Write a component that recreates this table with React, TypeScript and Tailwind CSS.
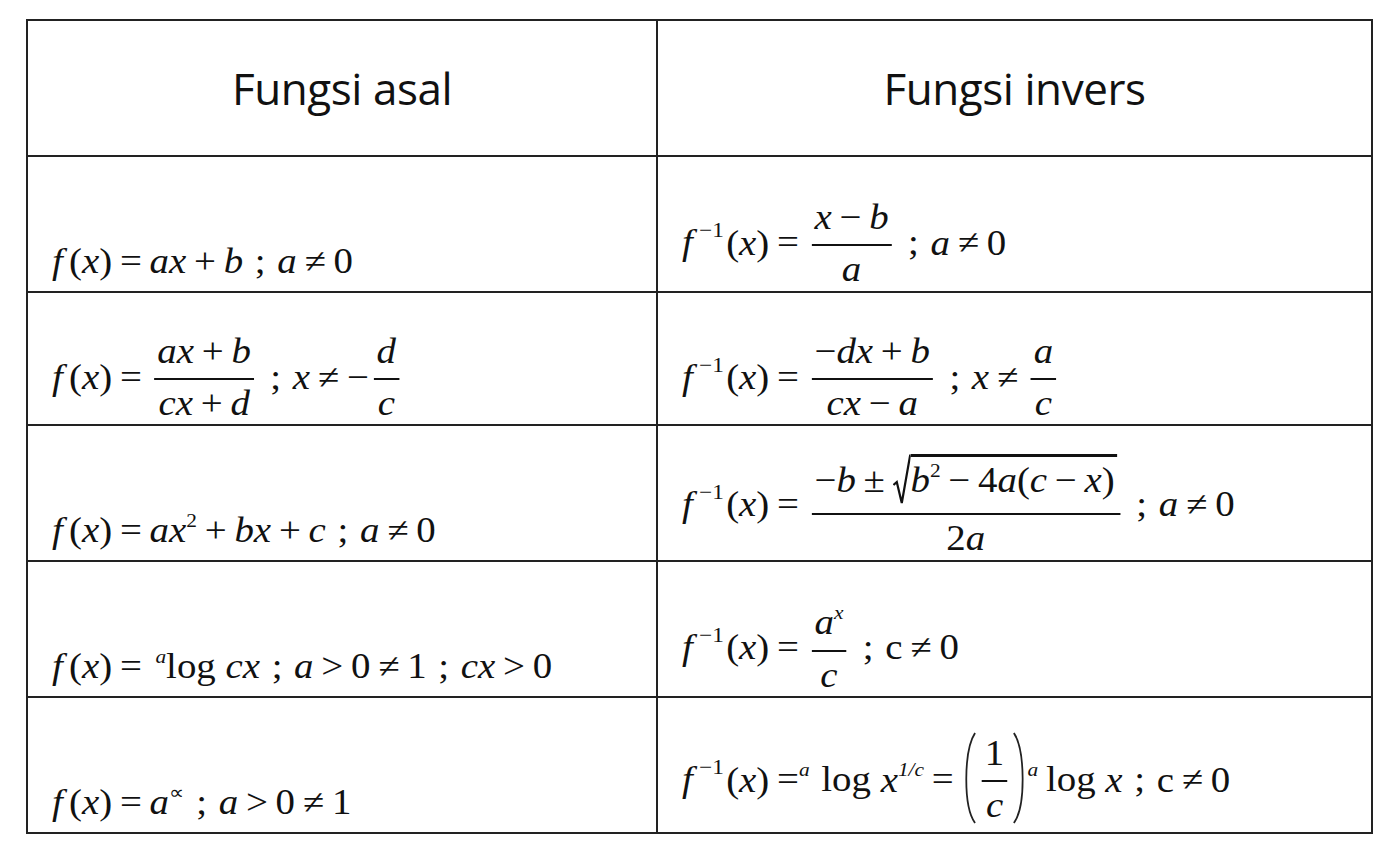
import React from "react";

type C = { children?: React.ReactNode };

const V = ({ children }: C) => <i className="italic">{children}</i>;
const F = () => <i className="italic mr-[0.16em]">f</i>;
const Op = ({ children }: C) => <span className="mx-[0.2em]">{children}</span>;
const Semi = () => <span className="mx-[0.3em]">;</span>;
const Sup = ({ children }: C) => <span className="text-[0.55em] align-[0.8em]">{children}</span>;

const Frac = ({ n, d }: { n: React.ReactNode; d: React.ReactNode }) => (
  <span className="inline-flex flex-col items-center align-middle mx-[0.12em]">
    <span className="px-[0.08em] pb-[9px]">{n}</span>
    <span className="self-stretch h-[2px] bg-[#111]"></span>
    <span className="px-[0.08em] pt-[6px] pb-[6px]">{d}</span>
  </span>
);

const FInv = () => (
  <>
    <F />
    <span className="text-[0.6em] align-[0.8em] mr-[0.1em]">−1</span>(<V>x</V>)
  </>
);
const Fx = () => (
  <>
    <F />(<V>x</V>)
  </>
);

const Radical = ({ children }: C) => (
  <span className="inline-flex items-baseline">
    <svg className="self-stretch w-[16px]" viewBox="0 0 16 50" preserveAspectRatio="none">
      <path d="M0.5 31 L3.5 28 L8 49 L15.5 1.5 L16 1.5" fill="none" stroke="#111" strokeWidth="2" vectorEffect="non-scaling-stroke" />
    </svg>
    <span className="border-t-[3px] border-[#111] pt-[4px] pb-[5px] pr-[2px]">{children}</span>
  </span>
);

const Paren = ({ flip }: { flip?: boolean }) => (
  <svg width="14" height="92" viewBox="0 0 14 92" className={flip ? "-scale-x-100" : ""}>
    <path d="M12 1 C2 18 1 74 12 91" fill="none" stroke="#222" strokeWidth="1.6" />
  </svg>
);

const Math = ({ children }: C) => (
  <span className="inline-block origin-left scale-x-[1.11] font-['Liberation_Serif',serif] text-[35px] leading-none text-[#111] whitespace-nowrap">
    {children}
  </span>
);

const Head = ({ children, left }: C & { left?: boolean }) => (
  <div
    className={
      "flex items-center justify-center font-['Open_Sans',sans-serif] text-[44px] text-[#111] tracking-[-0.01em] " +
      (left ? "w-[630px] border-r-2 border-[#222]" : "flex-1")
    }
  >
    {children}
  </div>
);

const LeftBottom = ({ children }: C) => (
  <div className="w-[630px] border-r-2 border-[#222] flex items-end pl-[24px] pb-[12px]">
    <Math>{children}</Math>
  </div>
);
const LeftCenter = ({ children }: C) => (
  <div className="w-[630px] border-r-2 border-[#222] flex items-center pl-[24px] pt-[44px]">
    <Math>{children}</Math>
  </div>
);
const Right = ({ children, pt = "pt-[44px]" }: C & { pt?: string }) => (
  <div className={"flex-1 flex items-center pl-[24px] " + pt}>
    <Math>{children}</Math>
  </div>
);

export default function App() {
  return (
    <div className="w-[1400px] h-[861px] bg-white overflow-hidden">
      <div className="ml-[26px] mt-[19px] w-[1347px] border-2 border-[#222] flex flex-col">
        <div className="h-[134px] flex">
          <Head left>Fungsi asal</Head>
          <Head>Fungsi invers</Head>
        </div>

        <div className="h-[136px] flex border-t-2 border-[#222]">
          <LeftBottom>
            <Fx />
            <Op>=</Op>
            <V>ax</V>
            <Op>+</Op>
            <V>b</V>
            <Semi />
            <V>a</V>
            <Op>≠</Op>0
          </LeftBottom>
          <Right>
            <FInv />
            <Op>=</Op>
            <Frac
              n={
                <>
                  <V>x</V>
                  <Op>−</Op>
                  <V>b</V>
                </>
              }
              d={<V>a</V>}
            />
            <Semi />
            <V>a</V>
            <Op>≠</Op>0
          </Right>
        </div>

        <div className="h-[133px] flex border-t-2 border-[#222]">
          <LeftCenter>
            <Fx />
            <Op>=</Op>
            <Frac
              n={
                <>
                  <V>ax</V>
                  <Op>+</Op>
                  <V>b</V>
                </>
              }
              d={
                <>
                  <V>cx</V>
                  <Op>+</Op>
                  <V>d</V>
                </>
              }
            />
            <Semi />
            <V>x</V>
            <Op>≠</Op>−
            <Frac n={<V>d</V>} d={<V>c</V>} />
          </LeftCenter>
          <Right>
            <FInv />
            <Op>=</Op>
            <Frac
              n={
                <>
                  −<V>dx</V>
                  <Op>+</Op>
                  <V>b</V>
                </>
              }
              d={
                <>
                  <V>cx</V>
                  <Op>−</Op>
                  <V>a</V>
                </>
              }
            />
            <Semi />
            <V>x</V>
            <Op>≠</Op>
            <Frac n={<V>a</V>} d={<V>c</V>} />
          </Right>
        </div>

        <div className="h-[136px] flex border-t-2 border-[#222]">
          <LeftBottom>
            <Fx />
            <Op>=</Op>
            <V>ax</V>
            <Sup>2</Sup>
            <Op>+</Op>
            <V>bx</V>
            <Op>+</Op>
            <V>c</V>
            <Semi />
            <V>a</V>
            <Op>≠</Op>0
          </LeftBottom>
          <Right pt="pt-[30px]">
            <FInv />
            <Op>=</Op>
            <Frac
              n={
                <>
                  −<V>b</V>
                  <Op>±</Op>
                  <Radical>
                    <V>b</V>
                    <Sup>2</Sup>
                    <Op>−</Op>4<V>a</V>(<V>c</V>
                    <Op>−</Op>
                    <V>x</V>)
                  </Radical>
                </>
              }
              d={
                <>
                  2<V>a</V>
                </>
              }
            />
            <Semi />
            <V>a</V>
            <Op>≠</Op>0
          </Right>
        </div>

        <div className="h-[136px] flex border-t-2 border-[#222]">
          <LeftBottom>
            <Fx />
            <Op>=</Op>
            <span className="ml-[0.15em]">
              <Sup>
                <V>a</V>
              </Sup>
            </span>
            log <V>cx</V>
            <Semi />
            <V>a</V>
            <Op>&gt;</Op>0<Op>≠</Op>1<Semi />
            <V>cx</V>
            <Op>&gt;</Op>0
          </LeftBottom>
          <Right>
            <FInv />
            <Op>=</Op>
            <Frac
              n={
                <>
                  <V>a</V>
                  <Sup>
                    <V>x</V>
                  </Sup>
                </>
              }
              d={<V>c</V>}
            />
            <Semi />c<Op>≠</Op>0
          </Right>
        </div>

        <div className="h-[136px] flex border-t-2 border-[#222]">
          <LeftBottom>
            <Fx />
            <Op>=</Op>
            <V>a</V>
            <Sup>∝</Sup>
            <Semi />
            <V>a</V>
            <Op>&gt;</Op>0<Op>≠</Op>1
          </LeftBottom>
          <Right pt="pt-[36px]">
            <FInv />
            <span className="ml-[0.2em]">=</span>
            <Sup>
              <V>a</V>
            </Sup>
            <span className="ml-[0.3em]">log</span> <V>x</V>
            <Sup>
              <V>1/c</V>
            </Sup>
            <Op>=</Op>
            <span className="inline-flex items-start align-middle pb-[6px]">
              <Paren />
              <span className="pt-[4px]">
                <Frac n={<span>1</span>} d={<V>c</V>} />
              </span>
              <Paren flip />
            </span>
            <Sup>
              <V>a</V>
            </Sup>
            <span className="ml-[0.2em]">log</span> <V>x</V>
            <Semi />c<Op>≠</Op>0
          </Right>
        </div>
      </div>
    </div>
  );
}
